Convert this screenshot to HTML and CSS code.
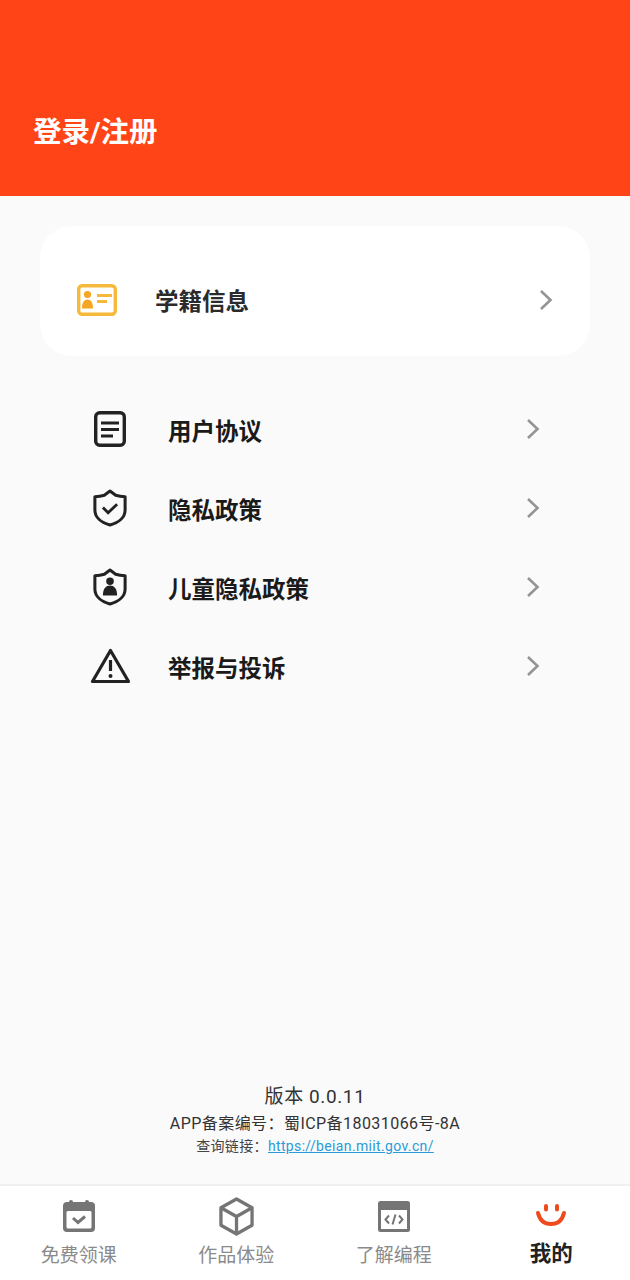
FILE: index.html
```html
<!DOCTYPE html>
<html lang="zh-CN">
<head>
    <meta charset="UTF-8">
    <meta name="viewport" content="width=device-width, initial-scale=1.0">
    <title>我的</title>
    <link rel="stylesheet" href="styles.css">
</head>
<body>
    <header class="top">
        <div class="login">登录/注册</div>
    </header>

    <main class="content">
        <div class="card">
            <svg class="card-icon" width="40" height="32" viewBox="0 0 40 32">
                <rect x="1.700" y="1.700" width="36.600" height="28.600" rx="3.500" fill="#fff" stroke="#f6b93b" stroke-width="3.400"/>
                <circle cx="10.500" cy="10.500" r="3.600" fill="#f5a623"/>
                <path d="M5 24.500c0-6 2.200-9 5.500-9s5.500 3 5.500 9z" fill="#f5a623"/>
                <path d="M20 11.500h15M20 17.500h10" stroke="#f6b93b" stroke-width="3" fill="none"/>
            </svg>
            <span class="card-label">学籍信息</span>
            <svg class="chev" width="14" height="22" viewBox="0 0 14 22"><path d="M2 2l9.500 9-9.500 9" fill="none" stroke="#949494" stroke-width="2.600"/></svg>
        </div>

        <div class="list">
            <div class="row">
                <span class="row-icon">
                    <svg width="32" height="36" viewBox="0 0 32 36">
                        <rect x="1.700" y="1.700" width="28.600" height="32.600" rx="4" fill="none" stroke="#222" stroke-width="3.400"/>
                        <path d="M7 12h18M7 18.500h18M7 25h12" stroke="#222" stroke-width="3" fill="none"/>
                    </svg>
                </span>
                <span class="row-label">用户协议</span>
                <svg class="chev" width="14" height="22" viewBox="0 0 14 22"><path d="M2 2l9.500 9-9.500 9" fill="none" stroke="#949494" stroke-width="2.600"/></svg>
            </div>
            <div class="row">
                <span class="row-icon">
                    <svg width="34" height="40" viewBox="0 0 36 40">
                        <path d="M18 2l6 4.500q4.500 1.500 10 1.500v14c0 8-7 13.500-16 16C9 35.500 2 30 2 22V8q5.500 0 10-1.500z" fill="none" stroke="#222" stroke-width="3.200" stroke-linejoin="round"/>
                        <path d="M10.500 19.500l5.500 5.500 9.500-9" fill="none" stroke="#222" stroke-width="3"/>
                    </svg>
                </span>
                <span class="row-label">隐私政策</span>
                <svg class="chev" width="14" height="22" viewBox="0 0 14 22"><path d="M2 2l9.500 9-9.500 9" fill="none" stroke="#949494" stroke-width="2.600"/></svg>
            </div>
            <div class="row">
                <span class="row-icon">
                    <svg width="34" height="40" viewBox="0 0 36 40">
                        <path d="M18 2l6 4.500q4.500 1.500 10 1.500v14c0 8-7 13.500-16 16C9 35.500 2 30 2 22V8q5.500 0 10-1.500z" fill="none" stroke="#222" stroke-width="3.200" stroke-linejoin="round"/>
                        <circle cx="18" cy="14" r="4" fill="#222"/>
                        <path d="M10.500 29c0-7 3-10.500 7.500-10.500s7.500 3.500 7.500 10.500z" fill="#222"/>
                    </svg>
                </span>
                <span class="row-label">儿童隐私政策</span>
                <svg class="chev" width="14" height="22" viewBox="0 0 14 22"><path d="M2 2l9.500 9-9.500 9" fill="none" stroke="#949494" stroke-width="2.600"/></svg>
            </div>
            <div class="row">
                <span class="row-icon">
                    <svg width="41" height="36" viewBox="0 0 41 36">
                        <path d="M20.500 2.500L2.500 33.500h36z" fill="none" stroke="#222" stroke-width="3.200" stroke-linejoin="round"/>
                        <path d="M20.500 12v11" stroke="#222" stroke-width="3.200"/>
                        <circle cx="20.500" cy="28" r="2" fill="#222"/>
                    </svg>
                </span>
                <span class="row-label">举报与投诉</span>
                <svg class="chev" width="14" height="22" viewBox="0 0 14 22"><path d="M2 2l9.500 9-9.500 9" fill="none" stroke="#949494" stroke-width="2.600"/></svg>
            </div>
        </div>

        <div class="about">
            <div class="version">版本 0.0.11</div>
            <div class="record">APP备案编号：蜀ICP备18031066号-8A</div>
            <div class="query">查询链接：<a href="#" class="link">https://beian.miit.gov.cn/</a></div>
        </div>
    </main>

    <nav class="tabs">
        <div class="tab">
            <span class="tab-icon">
                <svg width="32" height="32" viewBox="0 0 32 32">
                    <rect y="2" width="32" height="30" rx="4" fill="#757575"/>
                    <circle cx="8" cy="2" r="2" fill="#757575"/>
                    <circle cx="24" cy="2" r="2" fill="#757575"/>
                    <rect x="3.500" y="11" width="25" height="17.500" rx="1.500" fill="#fff"/>
                    <path d="M10 18l5 4.500 7-6" fill="none" stroke="#757575" stroke-width="3"/>
                </svg>
            </span>
            <span class="tab-label">免费领课</span>
        </div>
        <div class="tab">
            <span class="tab-icon">
                <svg width="35" height="39" viewBox="0 0 36 40">
                    <path d="M18 2l16 9v18l-16 9-16-9V11z" fill="none" stroke="#757575" stroke-width="3.400" stroke-linejoin="round"/>
                    <path d="M2 11l16 9 16-9M18 20v18" fill="none" stroke="#757575" stroke-width="3.400"/>
                </svg>
            </span>
            <span class="tab-label">作品体验</span>
        </div>
        <div class="tab">
            <span class="tab-icon">
                <svg width="32" height="31" viewBox="0 0 32 31">
                    <rect width="32" height="31" rx="2.500" fill="#757575"/>
                    <rect x="3" y="9" width="26" height="19" fill="#fff"/>
                    <path d="M11 14.500l-3.500 4 3.500 4M21 14.500l3.500 4-3.500 4M17.500 13.500l-3 10" fill="none" stroke="#757575" stroke-width="2"/>
                </svg>
            </span>
            <span class="tab-label">了解编程</span>
        </div>
        <div class="tab tab-active">
            <span class="tab-icon">
                <svg width="32" height="32" viewBox="0 0 32 32">
                    <path d="M3 13C5 21 10 24 16 24S27 21 29 13" fill="none" stroke="#ee4a1d" stroke-width="4" stroke-linecap="round"/>
                    <path d="M11 6v3.500M22 6v3.500" stroke="#ee4a1d" stroke-width="4" stroke-linecap="round"/>
                </svg>
            </span>
            <span class="tab-label">我的</span>
        </div>
    </nav>
</body>
</html>
```

FILE: styles.css
```css
* { box-sizing: border-box; }
html, body { height: 100%; }
body { margin: 0; height: 1280px; display: flex; flex-direction: column; background-color: #fafafa; color: #222; font-family: Roboto, "Noto Sans CJK SC", sans-serif; }

.top { height: 196px; flex: none; background-color: #ff4517; display: flex; align-items: flex-end; padding: 0 0 43px 33px; }
.login { color: #fff; font-size: 28.500px; line-height: 40px; font-weight: 700; }

.content { flex: 1; display: flex; flex-direction: column; padding: 30px 40px 0; }

.card { height: 130px; flex: none; display: flex; align-items: center; background-color: #fff; border-radius: 32px; padding: 18px 37px 0; }
.card-icon { flex: none; margin-right: 38px; }
.card-label { flex: 1; font-size: 23.500px; font-weight: 700; color: #2b2b2b; }

.list { margin-top: 33px; display: flex; flex-direction: column; }
.row { height: 79px; display: flex; align-items: center; padding: 0 50px 0 44px; }
.row-icon { width: 52px; flex: none; display: flex; justify-content: center; margin-right: 32px; }
.row-label { flex: 1; font-size: 23.500px; font-weight: 700; color: #1a1a1a; padding-top: 2px; }
.chev { flex: none; }

.about { margin-top: auto; padding-bottom: 27px; text-align: center; color: #333; }
.version { font-size: 19px; line-height: 28px; letter-spacing: 0.600px; margin-top: 1px; margin-bottom: 1px; }
.record { font-size: 16px; line-height: 24px; letter-spacing: 0.440px; }
.query { font-size: 14px; line-height: 21px; letter-spacing: 0.350px; color: #444; }
.link { color: #2a9bd8; }

.tabs { height: 96px; flex: none; display: flex; background-color: #fff; border-top: 2px solid #f0f0f0; padding-top: 10px; }
.tab { flex: 1; display: flex; flex-direction: column; align-items: center; font-size: 19px; line-height: 26px; color: #8a8a8a; }
.tab-icon { height: 40px; display: flex; align-items: center; justify-content: center; }
.tab-label { margin-top: 7px; }
.tab-active { font-size: 21.500px; font-weight: 700; color: #222; }
.tab-active .tab-label { margin-top: 5px; }
```
